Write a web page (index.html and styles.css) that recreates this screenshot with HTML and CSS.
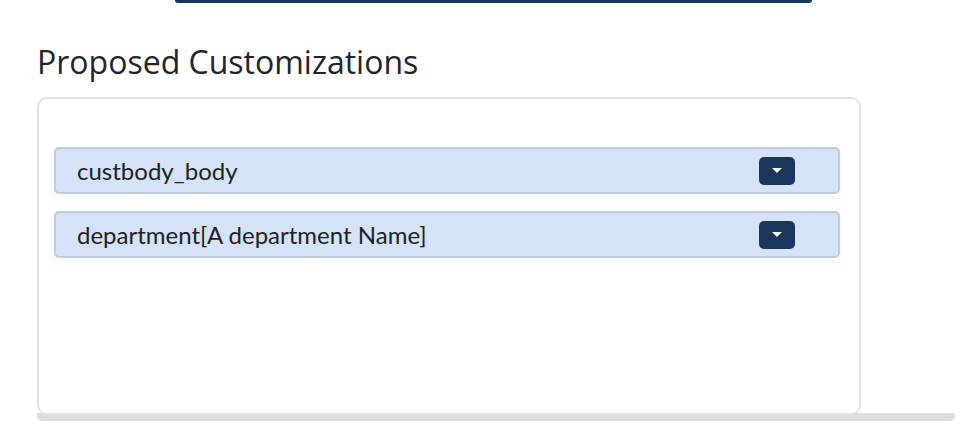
FILE: index.html
```html
<!DOCTYPE html>
<html>
<head>
<meta charset="utf-8">
<link rel="stylesheet" href="styles.css">
</head>
<body>
<div class="topbar"></div>
<h2 class="title">Proposed Customizations</h2>
<div class="panel-wrap">
  <div class="panel">
    <div class="row">
      <span class="label">custbody_body</span>
      <button class="toggle" type="button"><span class="caret"></span></button>
    </div>
    <div class="row">
      <span class="label">department[A department Name]</span>
      <button class="toggle" type="button"><span class="caret"></span></button>
    </div>
  </div>
</div>
</body>
</html>
```
FILE: styles.css
```css
html, body {
  margin: 0;
  padding: 0;
  background: #ffffff;
}
body {
  width: 980px;
  height: 440px;
  overflow: hidden;
  font-family: Lato, "Open Sans", sans-serif;
}
.topbar {
  margin-left: 175px;
  width: 637px;
  height: 3px;
  background: #1b365d;
  border-radius: 0 0 4px 4px;
}
.title {
  margin: 40px 0 16px 37px;
  font-family: "Open Sans", sans-serif;
  font-weight: 400;
  font-size: 32px;
  line-height: 38px;
  color: #212529;
}
.panel-wrap {
  margin-left: 37px;
  width: 918px;
  border-bottom: 8px solid #dedede;
  border-radius: 0 0 5px 5px;
}
.panel {
  width: 824px;
  height: 318px;
  box-sizing: border-box;
  margin-bottom: -2px;
  background: #ffffff;
  border: 2px solid #e4e4e4;
  border-radius: 10px;
  padding: 48px 19px 0 15px;
  display: flex;
  flex-direction: column;
  gap: 17px;
}
.row {
  height: 47px;
  box-sizing: border-box;
  background: #d5e3f8;
  border: 2px solid #bccde6;
  border-radius: 5px;
  display: flex;
  align-items: center;
  padding: 0 43px 0 21px;
}
.label {
  flex: 1;
  font-family: Lato, sans-serif;
  font-size: 24px;
  color: #222;
}
.toggle {
  width: 36px;
  height: 28px;
  border: none;
  border-radius: 5px;
  background: #1b365d;
  padding: 0;
  display: flex;
  align-items: center;
  justify-content: center;
}
.caret {
  width: 0;
  height: 0;
  border-left: 5px solid transparent;
  border-right: 5px solid transparent;
  border-top: 5px solid #ffffff;
}
```
